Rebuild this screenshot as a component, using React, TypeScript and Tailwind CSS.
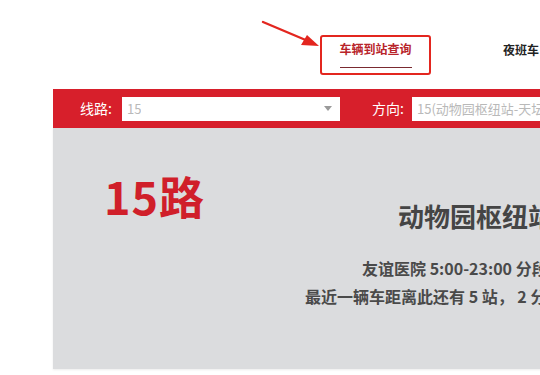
import React from 'react';

const cjk = { fontFamily: '"Noto Sans CJK SC", "Noto Sans", sans-serif' };

const Arrow = () => (
  <svg className="absolute left-[258px] top-[16px]" width="66" height="36" viewBox="0 0 66 36">
    <line x1="5" y1="6" x2="50" y2="25" stroke="#e3261f" strokeWidth="2.4" strokeLinecap="round" />
    <polygon points="61,30 43,29 49,19" fill="#e3261f" />
  </svg>
);

const Select = ({ value, width, arrow }: { value: string; width: string; arrow?: boolean }) => (
  <div className={`${width} h-[24px] bg-white flex items-center justify-between pl-[5px] pr-[8px] shrink-0`}>
    <span className="text-[13px] text-[#b9b9b9] whitespace-nowrap overflow-hidden">{value}</span>
    {arrow && (
      <span className="w-0 h-0 border-l-[4px] border-r-[4px] border-t-[5px] border-l-transparent border-r-transparent border-t-[#9a9a9a]" />
    )}
  </div>
);

export default function App() {
  return (
    <div className="relative w-[540px] h-[375px] overflow-hidden bg-white" style={cjk}>
      {/* 顶部导航 */}
      <div className="flex items-start h-[89px] pt-[35px]">
        <div className="ml-[320px] w-[111px] h-[40px] border-2 border-[#e3261f] rounded-[3px] flex flex-col items-center pt-[3px]">
          <span className="text-[12px] font-bold text-[#b8242a] leading-[18px]">车辆到站查询</span>
          <span className="mt-[9px] w-[72px] h-px bg-[#7a2a30]" />
        </div>
        <span className="ml-[72px] mt-[6px] text-[12px] font-bold text-[#222] whitespace-nowrap leading-[18px]">夜班车</span>
      </div>
      <Arrow />

      <div className="ml-[53px] w-[760px]">
        {/* 选择栏 */}
        <div className="h-[39px] bg-[#d71f2b] flex items-center">
          <span className="ml-[27px] w-[42px] text-[14px] text-white">线路:</span>
          <Select value="15" width="w-[218px]" arrow />
          <span className="ml-[32px] w-[40px] text-[14px] text-white">方向:</span>
          <Select value="15(动物园枢纽站-天坛南门)" width="w-[300px]" arrow />
        </div>

        {/* 信息面板 */}
        <div className="h-[241px] bg-[#dbdcde] shadow-[0_1px_2px_rgba(0,0,0,0.08)] relative">
          <div className="absolute left-[51px] top-[37px] text-[45px] font-bold text-[#d01f2a] leading-[62px] tracking-[1px]">15路</div>
          <div className="flex flex-col pt-[70px]">
            <span className="ml-[345px] text-[26px] font-bold text-[#454545] leading-[36px] whitespace-nowrap">动物园枢纽站</span>
            <span className="ml-[309px] mt-[20px] text-[16px] font-bold text-[#4a4a4a] leading-[28px] whitespace-nowrap">友谊医院 5:00-23:00 分段计价</span>
            <span className="ml-[252px] text-[16px] font-bold text-[#4a4a4a] leading-[28px] whitespace-nowrap">最近一辆车距离此还有 5 站， 2 分钟</span>
          </div>
        </div>
      </div>
    </div>
  );
}
